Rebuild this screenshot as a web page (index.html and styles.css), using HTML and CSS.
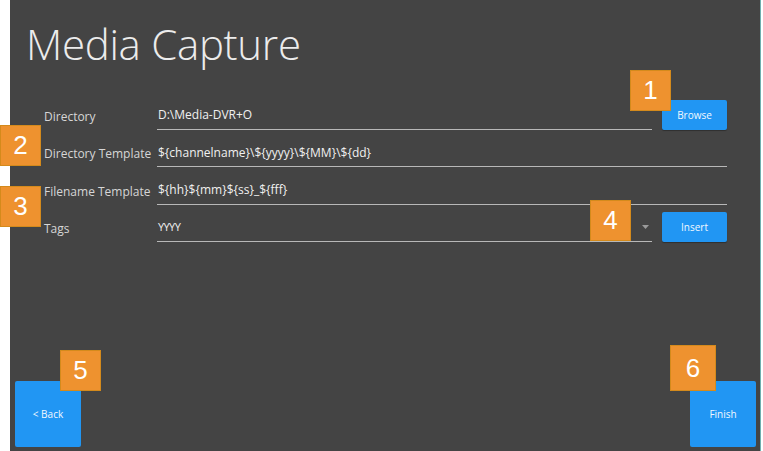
FILE: index.html
```html
<!DOCTYPE html>
<html lang="en">
<head>
  <meta charset="UTF-8" />
  <title>Media Capture</title>
  <link rel="stylesheet" href="styles.css">
</head>
<body>
  <div class="page">
    <div class="window">
      <h1>Media Capture</h1>
      <form class="settings">
        <label class="lbl">Directory</label>
        <input class="field" type="text" value="D:\Media-DVR+O" />
        <button type="button" class="btn small">Browse</button>

        <label class="lbl">Directory Template</label>
        <input class="field wide" type="text" value="${channelname}\${yyyy}\${MM}\${dd}" />

        <label class="lbl">Filename Template</label>
        <input class="field wide" type="text" value="${hh}${mm}${ss}_${fff}" />

        <label class="lbl">Tags</label>
        <div class="field combo">
          <span>YYYY</span>
          <svg class="arrow" width="7" height="4" viewBox="0 0 7 4"><path d="M0 0h7L3.5 4z" fill="#9a9a9a"/></svg>
        </div>
        <button type="button" class="btn small">Insert</button>
      </form>
      <div class="footer">
        <button type="button" class="btn big">&lt; Back</button>
        <button type="button" class="btn big">Finish</button>
      </div>
    </div>

    <span class="badge b1">1</span>
    <span class="badge b2">2</span>
    <span class="badge b3">3</span>
    <span class="badge b4">4</span>
    <span class="badge b5">5</span>
    <span class="badge b6">6</span>
  </div>
</body>
</html>
```

FILE: styles.css
```css
body { margin: 0; background: #fff; font-family: "Open Sans", "Noto Sans", sans-serif; }
.page { position: relative; width: 763px; height: 451px; overflow: hidden; background: #fff; }
.window { margin-left: 10px; width: 751px; height: 451px; background: #444444; border-right: 1px solid #6fb0b0; display: flex; flex-direction: column; box-sizing: border-box; }
h1 { margin: 0; padding: 14px 0 0 16px; font-size: 42px; line-height: 60px; font-weight: 300; color: #ececec; letter-spacing: -0.3px; }

.settings { display: grid; grid-template-columns: 103px 495px 65px; grid-auto-rows: 37.5px; column-gap: 10px; padding: 18px 0 0 34px; }
.lbl { align-self: end; padding-bottom: 5px; font-size: 12px; line-height: 16px; color: #d6d6d6; white-space: nowrap; }
.field { height: 100%; box-sizing: border-box; background: transparent; border: none; border-bottom: 1px solid #b8b8b8; padding: 9px 0 0 1px; margin: 0; font-family: inherit; font-size: 12px; color: #f0f0f0; outline: none; }
.field.wide { grid-column: 2 / 4; }
.combo { display: flex; align-items: center; justify-content: space-between; padding: 8px 3px 0 1px; }
.combo span { font-size: 11px; letter-spacing: -0.6px; }

.btn { background: #2196f3; color: #f2f8ff; border: none; border-radius: 2px; font-family: inherit; cursor: pointer; padding: 0; }
.btn.small { align-self: end; height: 30px; font-size: 10px; box-shadow: 0 1px 1px rgba(0,0,0,0.3); }
.footer { margin-top: auto; display: flex; justify-content: space-between; padding: 0 4px 4px 5px; }
.btn.big { width: 66px; height: 66px; font-size: 10px; }

.badge { position: absolute; width: 41px; height: 41px; box-sizing: border-box; background: #ee922f; border: 1px solid #d48a1c; color: #fff; font-family: "Liberation Sans", Arial, sans-serif; font-size: 26px; line-height: 39px; text-align: center; }
.b1 { left: 630px; top: 70px; }
.b2 { left: 0; top: 125px; }
.b3 { left: 0; top: 186px; }
.b4 { left: 590px; top: 200px; }
.b5 { left: 60px; top: 350px; }
.b6 { left: 670px; top: 345px; width: 46px; height: 46px; line-height: 44px; }
```
